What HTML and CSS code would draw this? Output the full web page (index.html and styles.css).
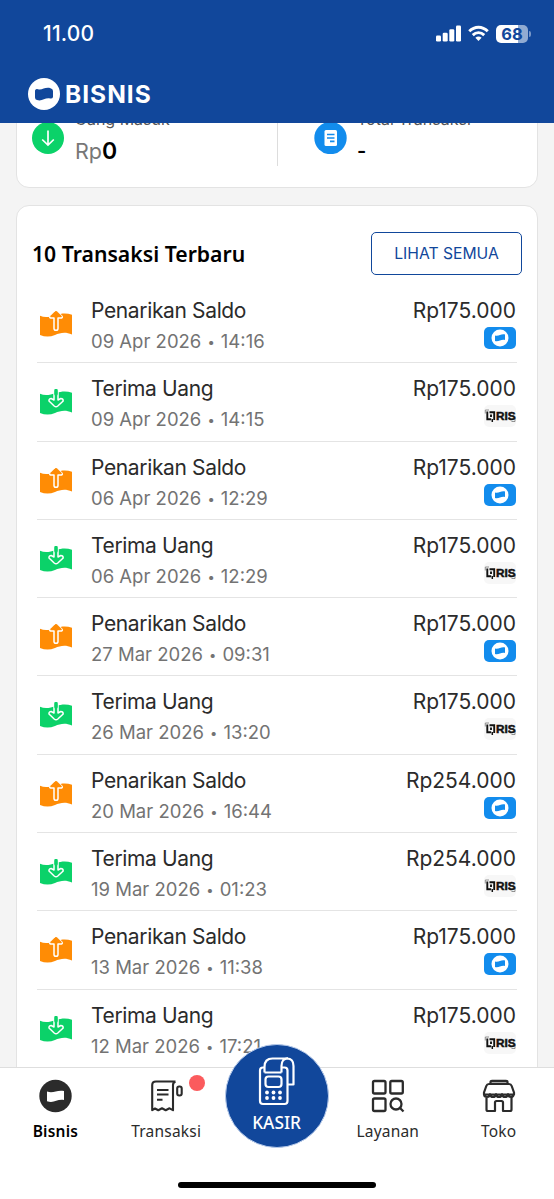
FILE: index.html
```html
<!DOCTYPE html>
<html lang="id">
<head>
<meta charset="utf-8">
<title>Bisnis</title>
<link rel="stylesheet" href="styles.css">
</head>
<body>
<svg class="defs" width="0" height="0">
  <symbol id="out" viewBox="0 0 32 26">
    <path d="M0 4.800C5 7 10 6 16 4S27 2 32 3.800V23.500C25 20.500 20 22 15 24S5 26 0 24Z" fill="#ff8c05"/>
    <path d="M14 17.500V7H10.500Q9.200 6.500 10 5.300L14.800 .8Q16 0 17.200 .8L22 5.300Q22.800 6.500 21.500 7H18V17.500Q18 19.300 16 19.300T14 17.500Z" fill="#ff8c05" stroke="#fff" stroke-width="1.500" stroke-linejoin="round"/>
    <path d="M10.500 5.300 14.800 1Q16 0 17.200 1L21.500 5.300Z" fill="#ff8c05" stroke="#ff8c05"/>
  </symbol>
  <symbol id="in" viewBox="0 0 32 26">
    <path d="M0 4.800C5 7 10 6 16 4S27 2 32 3.800V23.500C25 20.500 20 22 15 24S5 26 0 24Z" fill="#0bd269"/>
    <path d="M14 2V11L11.200 9.500Q8.800 9.500 9 12L14.200 17Q16 18.500 17.800 17L23.200 12Q23.200 9.500 20.800 9.500L18 11V2Q16 0 14 2Z" fill="#0bd269" stroke="#fff" stroke-width="1.500" stroke-linejoin="round"/>
    <path d="M16 1.500V5" stroke="#0bd269" stroke-width="3.500" stroke-linecap="round"/>
  </symbol>
  <symbol id="wallet" viewBox="0 0 32 22">
    <rect width="32" height="22" rx="5" fill="#128ced"/>
    <circle cx="16" cy="11" r="8.500" fill="#fff"/>
    <path d="M11 8.500C15 9.500 17 6.500 21 7.500V13C17 12 15 15 11 14Z" fill="#128ced"/>
  </symbol>
  <symbol id="qris" viewBox="0 0 32 22">
    <rect width="32" height="22" rx="5" fill="#f7f7f7"/>
    <path d="M1.300 8.500V5H5M31 12.500V16.500H27.500" fill="none" stroke="#777" stroke-width=".8"/>
    <path d="M3.300 6.500V14.200H7.200M5.500 7.300H10.200V15M7 9.500V12" fill="none" stroke="#111" stroke-width="1.900"/>
    <path d="M8.300 14V17" stroke="#111" stroke-width="1.500"/>
    <g transform="translate(11.900 15) scale(1.050 1)"><text class="qris-text">RIS</text></g>
  </symbol>
</svg>
<div class="phone">
  <header class="header">
    <div class="status">
      <span class="time">11.00</span>
      <div class="indicators">
        <svg width="25" height="17" viewBox="0 0 25 17" fill="#fff"><rect y="10.500" width="5" height="6" rx="1.300"/><rect x="6.700" y="7.700" width="5" height="8.800" rx="1.300"/><rect x="13.300" y="4.300" width="5" height="12.200" rx="1.300"/><rect x="20" y=".5" width="5" height="16" rx="1.300"/></svg>
        <svg width="21" height="17" viewBox="0 0 22 17" fill="none" stroke="#fff" stroke-width="3"><path d="M1.300 6.200C7 .5 15 .5 20.700 6.200M5 10.200C8.500 6.700 13.500 6.700 17 10.200"/><path d="M11 16.300 7.700 13Q11 10.200 14.300 13Z" fill="#fff" stroke="none"/></svg>
        <div class="battery"><span>68</span></div><i class="tip"></i>
      </div>
    </div>
    <div class="brand">
      <svg width="32" height="32" viewBox="0 0 32 32"><circle cx="16" cy="16" r="16" fill="#fff"/><path d="M7 12.500Q8 10.500 10 11.200C14 12.500 17 8.700 22.500 10.200Q25 10.700 25 13V19Q24.500 21 22 20.500C17 19.500 14 23.700 9 22Q7 21.500 7 19.500Z" fill="#11479b"/></svg>
      <span>BISNIS</span>
    </div>
  </header>
  <main class="content">
    <section class="card summary">
      <div class="stat">
        <svg width="32" height="32" viewBox="0 0 32 32"><circle cx="16" cy="16" r="16" fill="#0bd269"/><path d="M16 8.500V22.500M10.200 17.500 16 23 21.800 17.500" fill="none" stroke="#fff" stroke-width="1.700"/></svg>
        <div><div class="label">Uang Masuk</div><div class="value"><span>Rp</span>0</div></div>
      </div>
      <div class="stat second">
        <svg width="33" height="32" viewBox="0 0 33 32"><circle cx="16.500" cy="16" r="16.200" fill="#128ced"/><rect x="10.500" y="8" width="12.500" height="16" rx="1.500" fill="#fff"/><path d="M13 12.500H20.500M13 16H20.500M16 19.300H20.500" stroke="#128ced" stroke-width="1.700"/></svg>
        <div><div class="label">Total Transaksi</div><div class="value dash">-</div></div>
      </div>
    </section>
    <section class="card list">
      <div class="list-head"><h1>10 Transaksi Terbaru</h1><button>LIHAT SEMUA</button></div>
      <div class="rows" id="rows"></div>
    </section>
  </main>
  <nav class="nav">
    <a class="tab active"><svg width="34" height="34" viewBox="0 0 34 34"><circle cx="17.500" cy="17" r="16.200" fill="#2b2b2b"/><path d="M9 12.500C15.500 15 18.500 10.500 26 12V21C18.500 20 16.500 24.500 9 22.300Z" fill="#fff"/></svg><span>Bisnis</span></a>
    <a class="tab"><svg width="34" height="34" viewBox="0 0 34 34" fill="none" stroke="#2b2b2b" stroke-width="2.100" stroke-linejoin="round"><path d="M26.500 2.500H7Q3.200 2.500 3.200 6V31.200L6 29.500 9.300 31.200 13 29.300 16.700 31.200 20.500 29.300 24 31.200V6Q24 3.500 26.500 2.500M8 11H19.500M8 15.500H19.500M8 20.800H13.500"/><rect x="28.200" y="7.500" width="4.500" height="9" rx="2"/></svg><span>Transaksi</span><i class="dot"></i></a>
    <a class="kasir"><svg width="38" height="50" viewBox="0 0 38 50" fill="none" stroke="#fff" stroke-width="2.200" stroke-linejoin="round"><path d="M6.500 10.500H5Q2 10.500 2 13.500V44Q2 47 5 47H26.500Q29.500 47 29.500 44V13.500Q29.500 10.500 26.500 10.500H24M6.500 15.500V10Q6.500 1.500 14.500 1.500H29Q35.500 1.500 35.500 9V27.500H29.500M23.500 15.500V9Q23.500 1.500 30 1.500M6.500 15.500H23.500"/><rect x="7.500" y="19.500" width="16" height="10.500" rx="3"/><g fill="#fff" stroke="none"><circle cx="9" cy="35.500" r="1.900"/><circle cx="15.500" cy="35.500" r="1.900"/><circle cx="22" cy="35.500" r="1.900"/><circle cx="9" cy="41" r="1.900"/><circle cx="15.500" cy="41" r="1.900"/><circle cx="22" cy="41" r="1.900"/></g></svg><span>KASIR</span></a>
    <a class="tab"><svg width="34" height="34" viewBox="0 0 34 34" fill="none" stroke="#2b2b2b" stroke-width="2.300"><rect x="2" y="2" width="12.500" height="12.500" rx="1.500"/><rect x="19.300" y="2" width="12.500" height="12.500" rx="1.500"/><rect x="2" y="19.500" width="12.500" height="12.500" rx="1.500"/><circle cx="25" cy="25" r="5.500"/><path d="M29 29 32.500 32.500"/></svg><span>Layanan</span></a>
    <a class="tab"><svg width="34" height="34" viewBox="0 0 34 34" fill="none" stroke="#2b2b2b" stroke-width="2.200" stroke-linejoin="round"><path d="M8.500 4.500V3Q8.500 1.800 10 1.800H24Q25.500 1.800 25.500 3V4.500" fill="#aaa"/><path d="M7 5H27Q29 5 29.700 7L32 13.500V15.500H2V13.500L4.300 7Q5 5 7 5ZM2 14.500Q2 18 5 18T8 15Q8.500 18 11 18T14 15Q14.500 18 17 18T20 15Q20.500 18 23 18T26 15Q26.500 18 29 18T32 14.500M4.500 18V30.500Q4.500 32 6 32H13V23.500Q13 22 14.500 22H19.500Q21 22 21 23.500V32H28Q29.500 32 29.500 30.500V18"/></svg><span>Toko</span></a>
    <div class="home"></div>
  </nav>
</div>
<script src="app.js"></script>
</body>
</html>
```
FILE: styles.css
```css
* { box-sizing: border-box; }
body { margin: 0; font-family: Inter, "Noto Sans", sans-serif; color: #2b2b2b; }
.defs { position: absolute; }
.phone { width: 554px; height: 1199px; display: flex; flex-direction: column; background: #f4f4f4; overflow: hidden; }
.header { height: 123px; flex: none; background: #11479b; color: #fff; position: relative; }
.status { height: 67px; padding: 0 23px 0 43px; display: flex; align-items: center; justify-content: space-between; }
.time { font-size: 21px; font-weight: 500; letter-spacing: .2px; }
.indicators { display: flex; align-items: center; gap: 7px; }
.battery { width: 32px; height: 18px; border-radius: 5px; background: linear-gradient(90deg, #fff 69%, #91abd2 69%); color: #11479b; font-size: 16.5px; font-weight: 700; line-height: 18px; text-align: center; }
.tip { width: 2px; height: 6px; border-radius: 0 2px 2px 0; background: #7897c8; margin-left: -6px; }
.brand { display: flex; align-items: center; gap: 5px; margin: 11px 0 0 28px; font: 700 24.5px/32px Inter, sans-serif; letter-spacing: 1px; }
.content { height: 944px; flex: none; overflow: hidden; padding: 0 16px; }
.card { background: #fff; border: 1.5px solid #e3e3e3; border-radius: 13px; }
.summary { height: 100px; margin-top: -35px; display: flex; padding: 33px 0 21px 15px; }
.stat { width: 246px; display: flex; gap: 11px; border-right: 1px solid #ddd; }
.stat > svg { flex: none; }
.stat.second { border: 0; padding-left: 36px; gap: 10px; }
.label { font-size: 16px; line-height: 20px; margin-top: -13px; color: #555; white-space: nowrap; }
.value { font: 600 23px/28px Inter, sans-serif; color: #000; margin-top: 8px; }
.value span { color: #777; font-size: 21.5px; font-weight: 400; }
.value.dash { font-size: 20px; }
.list { height: 900px; margin-top: 17px; padding: 25px 15px 0 16px; }
.list-head { display: flex; justify-content: space-between; align-items: center; height: 44px; }
h1 { margin: 1px 0 0 -1px; font: 600 21.2px/30px "Noto Sans", sans-serif; color: #000; }
button { width: 151px; height: 43px; border: 1.5px solid #11479b; border-radius: 5px; background: #fff; color: #11479b; font: 400 15.7px Inter, sans-serif; padding: 0; }
.rows { padding: 10px 5px 0 4px; }
.row { height: 78.3px; border-bottom: 1.5px solid #e4e4e4; display: flex; padding-left: 3px; }
.row > svg { width: 32px; height: 26px; margin-top: 26px; flex: none; }
.info { margin-left: 19px; flex: 1; }
.name, .amount { font-size: 21px; line-height: 28px; margin-top: 12px; white-space: nowrap; }
.name { letter-spacing: -.36px; }
.date { font-size: 18.5px; line-height: 24px; margin-top: 4px; color: #737373; white-space: nowrap; }
.bullet { font-size: 13px; margin: 0 .9px; vertical-align: 1px; }
.pay { display: flex; flex-direction: column; align-items: flex-end; margin-right: 1px; }
.pay svg { width: 32px; height: 22px; margin-top: 2px; }
.qris-text { font: 900 11.2px "Liberation Sans", sans-serif; fill: #111; stroke: #111; stroke-width: .5px; }
.nav { height: 132px; flex: none; background: #fff; border-top: 1px solid #dedede; position: relative; display: grid; grid-template-columns: repeat(5, 1fr); }
.tab { display: flex; flex-direction: column; align-items: center; padding-top: 11px; position: relative; font: 400 15.5px/22px "Noto Sans", sans-serif; gap: 7px; }
.tab span { letter-spacing: .2px; }
.active { font-weight: 600; color: #000; }
.dot { position: absolute; left: 78.500px; top: 6.500px; width: 16px; height: 16px; border-radius: 50%; background: #fb5b5d; }
.kasir { width: 104px; height: 104px; margin: -24px 0 0 3px; border-radius: 50%; border: 1px solid #b9cceb; background: #11479b; display: flex; flex-direction: column; align-items: center; padding-top: 12px; color: #fff; font: 500 17.3px/24px "Noto Sans", sans-serif; position: relative; gap: 4px; }
.home { position: absolute; left: 178px; bottom: 11px; width: 198px; height: 6px; border-radius: 3px; background: #000; }
```
FILE: app.js
```js
const transactions = [
  ["out", "09 Apr 2026", "14:16", "Rp175.000"],
  ["in", "09 Apr 2026", "14:15", "Rp175.000"],
  ["out", "06 Apr 2026", "12:29", "Rp175.000"],
  ["in", "06 Apr 2026", "12:29", "Rp175.000"],
  ["out", "27 Mar 2026", "09:31", "Rp175.000"],
  ["in", "26 Mar 2026", "13:20", "Rp175.000"],
  ["out", "20 Mar 2026", "16:44", "Rp254.000"],
  ["in", "19 Mar 2026", "01:23", "Rp254.000"],
  ["out", "13 Mar 2026", "11:38", "Rp175.000"],
  ["in", "12 Mar 2026", "17:21", "Rp175.000"]
];
document.getElementById("rows").innerHTML = transactions.map(([type, date, time, amount]) => `
  <div class="row">
    <svg><use href="#${type}"/></svg>
    <div class="info"><div class="name">${type === "out" ? "Penarikan Saldo" : "Terima Uang"}</div><div class="date">${date} <span class="bullet">•</span> ${time}</div></div>
    <div class="pay"><div class="amount">${amount}</div><svg><use href="#${type === "out" ? "wallet" : "qris"}"/></svg></div>
  </div>`).join("");
```
